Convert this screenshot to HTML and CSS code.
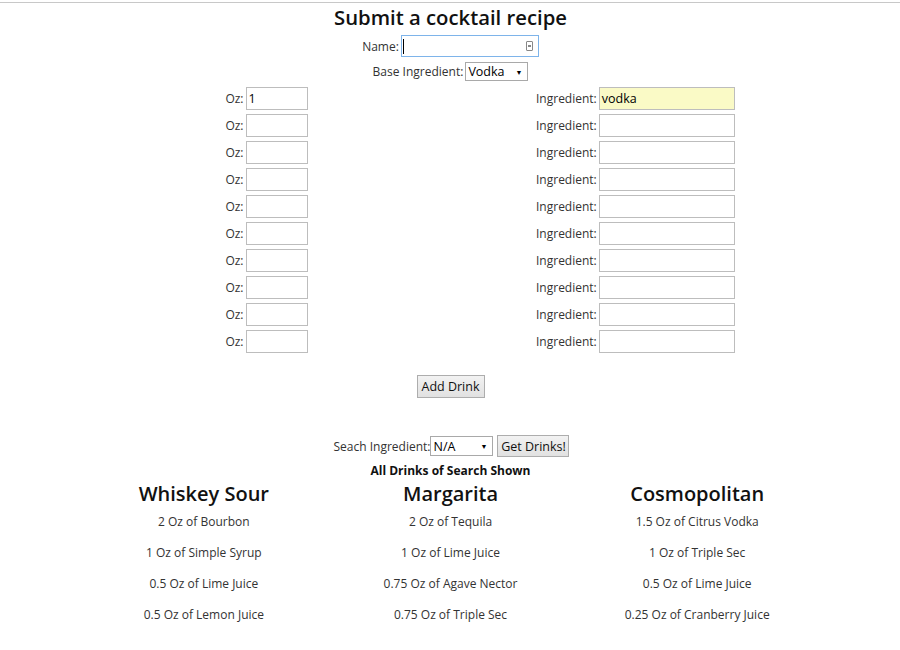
FILE: index.html
```html
<!DOCTYPE html>
<html>
<head>
<meta charset="utf-8">
<link rel="stylesheet" href="styles.css">
</head>
<body>
<div class="topline"></div>
<div class="page">
  <h1 class="title">Submit a cocktail recipe</h1>
  <div class="row name-row">
    <label class="lbl">Name:</label>
    <span class="field field-name focus"><span class="caret"></span><span class="keyicon"></span></span>
  </div>
  <div class="row base-row">
    <label class="lbl">Base Ingredient:</label>
    <span class="sel sel-base">Vodka<span class="arrow">▼</span></span>
  </div>
  <div class="pairs">
    <div class="col">
      <div class="pair"><label class="lbl">Oz:</label><span class="field field-oz">1</span></div>
      <div class="pair"><label class="lbl">Oz:</label><span class="field field-oz"></span></div>
      <div class="pair"><label class="lbl">Oz:</label><span class="field field-oz"></span></div>
      <div class="pair"><label class="lbl">Oz:</label><span class="field field-oz"></span></div>
      <div class="pair"><label class="lbl">Oz:</label><span class="field field-oz"></span></div>
      <div class="pair"><label class="lbl">Oz:</label><span class="field field-oz"></span></div>
      <div class="pair"><label class="lbl">Oz:</label><span class="field field-oz"></span></div>
      <div class="pair"><label class="lbl">Oz:</label><span class="field field-oz"></span></div>
      <div class="pair"><label class="lbl">Oz:</label><span class="field field-oz"></span></div>
      <div class="pair"><label class="lbl">Oz:</label><span class="field field-oz"></span></div>
    </div>
    <div class="col">
      <div class="pair"><label class="lbl">Ingredient:</label><span class="field field-ing autofill">vodka</span></div>
      <div class="pair"><label class="lbl">Ingredient:</label><span class="field field-ing"></span></div>
      <div class="pair"><label class="lbl">Ingredient:</label><span class="field field-ing"></span></div>
      <div class="pair"><label class="lbl">Ingredient:</label><span class="field field-ing"></span></div>
      <div class="pair"><label class="lbl">Ingredient:</label><span class="field field-ing"></span></div>
      <div class="pair"><label class="lbl">Ingredient:</label><span class="field field-ing"></span></div>
      <div class="pair"><label class="lbl">Ingredient:</label><span class="field field-ing"></span></div>
      <div class="pair"><label class="lbl">Ingredient:</label><span class="field field-ing"></span></div>
      <div class="pair"><label class="lbl">Ingredient:</label><span class="field field-ing"></span></div>
      <div class="pair"><label class="lbl">Ingredient:</label><span class="field field-ing"></span></div>
    </div>
  </div>
  <div class="row add-row">
    <span class="btn btn-add">Add Drink</span>
  </div>
  <div class="row search-row">
    <label class="lbl">Seach Ingredient:</label>
    <span class="sel sel-search">N/A<span class="arrow">▼</span></span>
    <span class="btn btn-get">Get Drinks!</span>
  </div>
  <div class="shown">All Drinks of Search Shown</div>
  <div class="drinks">
    <div class="drink">
      <h2 class="drink-name">Whiskey Sour</h2>
      <p class="item">2 Oz of Bourbon</p>
      <p class="item">1 Oz of Simple Syrup</p>
      <p class="item">0.5 Oz of Lime Juice</p>
      <p class="item">0.5 Oz of Lemon Juice</p>
    </div>
    <div class="drink">
      <h2 class="drink-name">Margarita</h2>
      <p class="item">2 Oz of Tequila</p>
      <p class="item">1 Oz of Lime Juice</p>
      <p class="item">0.75 Oz of Agave Nector</p>
      <p class="item">0.75 Oz of Triple Sec</p>
    </div>
    <div class="drink">
      <h2 class="drink-name">Cosmopolitan</h2>
      <p class="item">1.5 Oz of Citrus Vodka</p>
      <p class="item">1 Oz of Triple Sec</p>
      <p class="item">0.5 Oz of Lime Juice</p>
      <p class="item">0.25 Oz of Cranberry Juice</p>
    </div>
  </div>
</div>
</body>
</html>
```

FILE: styles.css
```css
html, body {
  margin: 0;
  padding: 0;
  background: #fff;
}
body {
  font-family: "Open Sans", "Noto Sans", sans-serif;
  font-size: 12px;
  color: #333;
}
.topline {
  height: 2px;
  border-bottom: 1px solid #c8c8c8;
}
.page {
  width: 740px;
  margin: 0 auto;
  padding-left: 1px;
}
.title {
  margin: 0;
  height: 30px;
  line-height: 29px;
  font-size: 20.3px;
  font-weight: 600;
  color: #111;
  text-align: center;
}
.row {
  display: flex;
  justify-content: center;
  align-items: center;
}
.lbl {
  color: #333;
  margin-right: 2px;
}
.name-row {
  margin-top: 2px;
  height: 22px;
}
.base-row {
  margin-top: 5px;
  height: 19px;
}
.field {
  display: inline-flex;
  align-items: center;
  box-sizing: border-box;
  border: 1px solid #bdbdbd;
  background: #fff;
  height: 23px;
  padding: 0 2px;
  color: #000;
  font-size: 12.5px;
}
.field-name {
  width: 138px;
  height: 22px;
  border-color: #7eb4ea;
  position: relative;
  padding-left: 1px;
}
.caret {
  width: 1px;
  height: 15px;
  background: #000;
}
.keyicon {
  position: absolute;
  right: 5px;
  top: 5px;
  width: 7px;
  height: 10px;
  border: 1px solid #888;
  border-radius: 1px;
  box-sizing: border-box;
}
.keyicon::after {
  content: "";
  position: absolute;
  left: 1px;
  top: 3px;
  width: 3px;
  height: 2px;
  background: #888;
}
.sel {
  display: inline-flex;
  align-items: center;
  box-sizing: border-box;
  border: 1px solid #a9a9a9;
  background: #fff;
  color: #000;
  padding-left: 2px;
  font-size: 12.5px;
  position: relative;
}
.arrow {
  position: absolute;
  right: 5px;
  top: 50%;
  transform: translateY(-50%);
  font-size: 7px;
  color: #000;
}
.sel-base {
  width: 63px;
  height: 19px;
}
.pairs {
  display: flex;
  margin-top: 6px;
}
.col {
  flex: 1;
  display: flex;
  flex-direction: column;
  align-items: center;
  gap: 4px;
}
.pair {
  display: flex;
  align-items: center;
  justify-content: flex-end;
}
.col:first-child .pair {
  width: 84px;
}
.col:last-child .pair {
  width: 199px;
}
.field-oz {
  width: 62px;
}
.field-ing {
  width: 137px;
}
.autofill {
  background: #fafac6;
}
.btn {
  display: inline-flex;
  align-items: center;
  justify-content: center;
  box-sizing: border-box;
  border: 1px solid #adadad;
  background: linear-gradient(#f2f2f2, #e1e1e1);
  color: #111;
  font-size: 12.5px;
}
.add-row {
  margin-top: 22px;
  height: 23px;
}
.btn-add {
  width: 68px;
  height: 23px;
}
.search-row {
  margin-top: 37px;
  height: 22px;
  padding-left: 2px;
}
.search-row .lbl {
  margin-right: 0;
}
.sel-search {
  width: 63px;
  height: 20px;
  margin-right: 4px;
}
.btn-get {
  width: 72px;
  height: 22px;
}
.shown {
  text-align: center;
  font-weight: 700;
  color: #111;
  margin-top: 5px;
  line-height: 17px;
}
.drinks {
  display: flex;
}
.drink {
  flex: 1;
  text-align: center;
}
.drink-name {
  margin: 1px 0 5px;
  font-size: 20px;
  font-weight: 600;
  line-height: 28px;
  color: #111;
}
.item {
  margin: 0 0 13px;
  line-height: 18px;
}
```
